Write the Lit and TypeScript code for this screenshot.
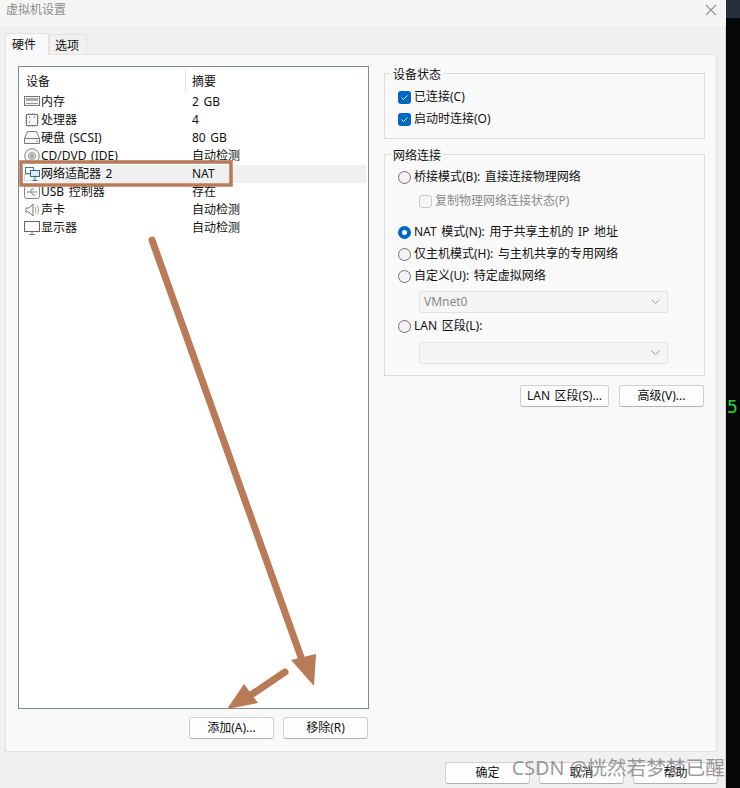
import { LitElement, html, css, svg } from "lit";
import { customElement } from "lit/decorators.js";

const icons: Record<string, unknown> = {
  mem: svg`<rect x=".5" y="2.5" width="15" height="9" fill="#f4f4f4" stroke="#777"/><rect x="2" y="4" width="12" height="3" fill="#aaa"/><path d="M2 9.5h12" stroke="#999"/>`,
  cpu: svg`<path d="M4.500 1v14M6.500 1v14M8.500 1v14M10.500 1v14M1 4.500h14M1 6.500h14M1 8.500h14M1 10.500h14" stroke="#aaa"/><rect x="2.500" y="2.500" width="11" height="11" fill="#f5f5f5" stroke="#777"/><path d="M5 5h1M10 5h1M5 10h1" stroke="#555"/>`,
  disk: svg`<path d="M3.500 1.500h9l3 7v5h-15v-5z" fill="#f7f7f7" stroke="#777"/><path d="M.5 8.500h15" stroke="#777"/><path d="M12 11h2" stroke="#888"/>`,
  cd: svg`<circle cx="8" cy="8" r="7.300" fill="#f2f2f2" stroke="#888"/><circle cx="8" cy="8" r="3.500" fill="#ddd" stroke="#999"/><circle cx="8" cy="8" r="1.300" fill="#fff" stroke="#777"/>`,
  net: svg`<rect x=".5" y="8.500" width="9" height="6" fill="#fff" stroke="#8aa" stroke-dasharray="1 1"/><rect x="1.500" y="1.500" width="8" height="6" fill="#fff" stroke="#4c6f8a"/><rect x="6.500" y="4.500" width="9" height="6" fill="#d8ecf6" stroke="#2f6f96"/><path d="M11 11v3M8.500 14.500h5" stroke="#2f6f96"/>`,
  usb: svg`<rect x=".5" y="1.500" width="15" height="13" rx="2" fill="#f6f6f6" stroke="#888"/><path d="M3 8h10M6 8l2-3h2M7 8l2 3h2" fill="none" stroke="#888"/>`,
  snd: svg`<path d="M2 6h3l4-4v12l-4-4H2z" fill="#fff" stroke="#777"/><path d="M11 5c1 1.500 1 4.500 0 6M13 3.500c2 2.500 2 6.500 0 9" fill="none" stroke="#999"/>`,
  mon: svg`<rect x=".5" y="1.500" width="15" height="10" fill="#fff" stroke="#666"/><path d="M5 14.500h6M8 12v2" stroke="#777"/>`,
};

const rows = [
  ["mem", "内存", "2 GB"],
  ["cpu", "处理器", "4"],
  ["disk", "硬盘 (SCSI)", "80 GB"],
  ["cd", "CD/DVD (IDE)", "自动检测"],
  ["net", "网络适配器 2", "NAT"],
  ["usb", "USB 控制器", "存在"],
  ["snd", "声卡", "自动检测"],
  ["mon", "显示器", "自动检测"],
];

@customElement("app-root")
export class AppRoot extends LitElement {
  static styles = css`
    :host {
      display: flex;
      position: relative;
      width: 740px;
      height: 788px;
      overflow: hidden;
      font: 12px/16px "Noto Sans", "Noto Sans CJK SC", sans-serif;
      word-spacing: 1.5px;
      color: #111;
    }
    .dialog {
      width: 726px;
      flex: none;
      background: #f0f0f0;
      display: flex;
      flex-direction: column;
      box-shadow: inset -1px 0 #d4d4d4;
    }
    .titlebar {
      box-sizing: border-box;
      height: 26px;
      flex: none;
      background: #f5f5f5;
      display: flex;
      align-items: center;
      justify-content: space-between;
      padding: 0 9px 6px 6px;
      color: #8c8c8c;
    }
    .tabs {
      display: flex;
      align-items: flex-end;
      height: 28px;
      flex: none;
      padding-left: 5px;
    }
    .tab {
      height: 20px;
      width: 38px;
      box-sizing: border-box;
      border: 1px solid #e2e2e2;
      border-bottom: 0;
      text-align: center;
      line-height: 21px;
      padding-right: 2px;
    }
    .tab.on {
      height: 22px;
      width: 44px;
      background: #f9f9f9;
      margin-bottom: -1px;
      position: relative;
      border-bottom: 0;
      padding-right: 6px;
    }
    .panel {
      box-sizing: border-box;
      width: 712px;
      height: 698px;
      margin-left: 5px;
      background: #f9f9f9;
      border: 1px solid #e2e2e2;
      padding: 11px 12px 0;
      display: flex;
      gap: 15px;
    }
    .left {
      width: 351px;
      flex: none;
    }
    .list {
      box-sizing: border-box;
      height: 643px;
      background: #fff;
      border: 1px solid #7f8a96;
      padding: 3px 1px 0;
    }
    .head,
    .row {
      display: grid;
      grid-template-columns: 165px 1fr;
    }
    .head {
      height: 23px;
      line-height: 23px;
    }
    .head span {
      padding-left: 6px;
    }
    .head span + span {
      border-left: 1px solid #e5e5e5;
    }
    .row {
      height: 18px;
      line-height: 18px;
    }
    .row.sel .name span,
    .row.sel .sum {
      background: #f0f0f0;
    }
    .row.sel .name span {
      flex: 1;
    }
    .name {
      display: flex;
      align-items: center;
      padding-left: 4px;
      gap: 1px;
      min-width: 0;
      white-space: nowrap;
    }
    .name svg {
      width: 16px;
      height: 16px;
      flex: none;
    }
    .sum {
      padding-left: 7px;
      margin-right: 1px;
    }
    .btns {
      display: flex;
      justify-content: flex-end;
      gap: 9px;
      margin-top: 8px;
      padding-right: 1px;
    }
    button {
      box-sizing: border-box;
      width: 85px;
      height: 22px;
      padding: 0;
      background: #fdfdfd;
      border: 1px solid #d0d0d0;
      border-bottom-color: #b0b0b0;
      border-radius: 3px;
      font: inherit;
      word-spacing: inherit;
      color: #111;
    }
    .right {
      width: 321px;
      flex: none;
      display: flex;
      flex-direction: column;
    }
    fieldset {
      margin: 0;
      padding: 0 0 0 13px;
      border: 1px solid #dcdcdc;
      min-width: 0;
      box-sizing: border-box;
    }
    fieldset.a {
      height: 76px;
      margin-top: -3px;
    }
    fieldset.b {
      height: 232px;
      margin-top: 5px;
    }
    legend {
      padding: 4px 2px 0;
      margin-left: -7px;
      line-height: 16px;
    }
    .opt {
      display: flex;
      align-items: center;
      gap: 3px;
      height: 16px;
      white-space: nowrap;
    }
    .check {
      width: 13px;
      height: 13px;
      box-sizing: border-box;
      border-radius: 3px;
      background: #0067c0;
      flex: none;
      display: flex;
    }
    .check.off {
      background: #f5f5f5;
      border: 1px solid #c8c8c8;
    }
    .check svg {
      width: 13px;
      height: 13px;
    }
    .radio {
      width: 13px;
      height: 13px;
      box-sizing: border-box;
      border-radius: 50%;
      border: 1px solid #6f6f6f;
      background: #f4f4f4;
      flex: none;
    }
    .radio.on {
      border: 4px solid #0067c0;
      background: #fff;
    }
    .dis {
      color: #8a8a8a;
    }
    .combo {
      box-sizing: border-box;
      width: 249px;
      height: 22px;
      margin-left: 21px;
      padding: 0 7px 0 4px;
      background: #f5f5f5;
      border: 1px solid #e3e3e3;
      border-radius: 2px;
      color: #8a8a8a;
      display: flex;
      align-items: center;
      justify-content: space-between;
    }
    .combo svg {
      margin-left: auto;
      width: 9px;
      height: 6px;
    }
    .t5 { margin-top: 5px; }
    .t6 { margin-top: 6px; }
    .t7 { margin-top: 7px; }
    .t8 { margin-top: 8px; }
    .t15 { margin-top: 15px; }
    .sub { margin-left: 21px; }
    .btns2 {
      display: flex;
      justify-content: flex-end;
      gap: 10px;
      margin-top: 9px;
      padding-right: 1px;
    }
    .btns2 button:first-child {
      width: 89px;
    }
    .foot {
      display: flex;
      justify-content: flex-end;
      gap: 9px;
      padding: 10px 8px 0 0;
    }
    .side {
      flex: 1;
      background: #060606;
      display: flex;
      flex-direction: column;
    }
    .sidetop {
      height: 18px;
      background: #25303c;
    }
    .five {
      margin-top: 380px;
      padding-left: 1px;
      color: #1fd62f;
      font: 18px/18px "DejaVu Sans Mono", monospace;
    }
    .marks {
      position: absolute;
      inset: 0;
      pointer-events: none;
    }
    .wm {
      position: absolute;
      right: 15px;
      top: 755px;
      font-size: 19.700px;
      line-height: 26px;
      word-spacing: 0;
      color: rgba(120, 120, 120, 0.75);
      white-space: nowrap;
    }
  `;

  private chk(off = false) {
    return html`<span class="check ${off ? "off" : ""}">
      ${off ? "" : html`<svg viewBox="0 0 13 13"><path d="M3.500 6.500l2 2 4-4" fill="none" stroke="#dbeafa" stroke-width="1"/></svg>`}
    </span>`;
  }

  private caret() {
    return html`<svg viewBox="0 0 9 6"><path d="M.5 .5l4 4 4-4" fill="none" stroke="#9a9a9a"/></svg>`;
  }

  render() {
    return html`
      <div class="dialog">
        <div class="titlebar">
          <span>虚拟机设置</span>
          <svg width="12" height="12" viewBox="0 0 12 12"><path d="M1 1l10 10M11 1L1 11" stroke="#8f8f8f" stroke-width="1.100"/></svg>
        </div>
        <div class="tabs">
          <div class="tab on">硬件</div>
          <div class="tab">选项</div>
        </div>
        <div class="panel">
          <div class="left">
            <div class="list">
              <div class="head"><span>设备</span><span>摘要</span></div>
              ${rows.map(
                ([ic, name, sum]) => html`<div class="row ${ic === "net" ? "sel" : ""}">
                  <div class="name"><svg viewBox="0 0 16 16">${icons[ic]}</svg><span>${name}</span></div>
                  <div class="sum">${sum}</div>
                </div>`
              )}
            </div>
            <div class="btns"><button>添加(A)...</button><button>移除(R)</button></div>
          </div>
          <div class="right">
            <fieldset class="a">
              <legend>设备状态</legend>
              <div class="opt t6">${this.chk()}<span>已连接(C)</span></div>
              <div class="opt t6">${this.chk()}<span>启动时连接(O)</span></div>
            </fieldset>
            <fieldset class="b">
              <legend>网络连接</legend>
              <div class="opt t5"><span class="radio"></span><span>桥接模式(B): 直接连接物理网络</span></div>
              <div class="opt t8 sub dis">${this.chk(true)}<span>复制物理网络连接状态(P)</span></div>
              <div class="opt t15"><span class="radio on"></span><span>NAT 模式(N): 用于共享主机的 IP 地址</span></div>
              <div class="opt t6"><span class="radio"></span><span>仅主机模式(H): 与主机共享的专用网络</span></div>
              <div class="opt t6"><span class="radio"></span><span>自定义(U): 特定虚拟网络</span></div>
              <div class="combo t7"><span>VMnet0</span>${this.caret()}</div>
              <div class="opt t5"><span class="radio"></span><span>LAN 区段(L):</span></div>
              <div class="combo t8">${this.caret()}</div>
            </fieldset>
            <div class="btns2"><button>LAN 区段(S)...</button><button>高级(V)...</button></div>
          </div>
        </div>
        <div class="foot"><button>确定</button><button>取消</button><button>帮助</button></div>
      </div>
      <div class="side">
        <div class="sidetop"></div>
        <div class="five">5</div>
      </div>
      <svg class="marks" width="740" height="788" viewBox="0 0 740 788">
        <rect x="21" y="162" width="210" height="23" fill="none" stroke="#b97a57" stroke-width="3.500"/>
        <path d="M152 240L302 660" stroke="#b97a57" stroke-width="7" stroke-linecap="round"/>
        <polygon points="291,660 316,654 314,686" fill="#b97a57"/>
        <path d="M285 672L245 699" stroke="#b97a57" stroke-width="7" stroke-linecap="round"/>
        <polygon points="244,684 258,703 227,709" fill="#b97a57"/>
      </svg>
      <div class="wm">CSDN @恍然若梦梦已醒</div>
    `;
  }
}
